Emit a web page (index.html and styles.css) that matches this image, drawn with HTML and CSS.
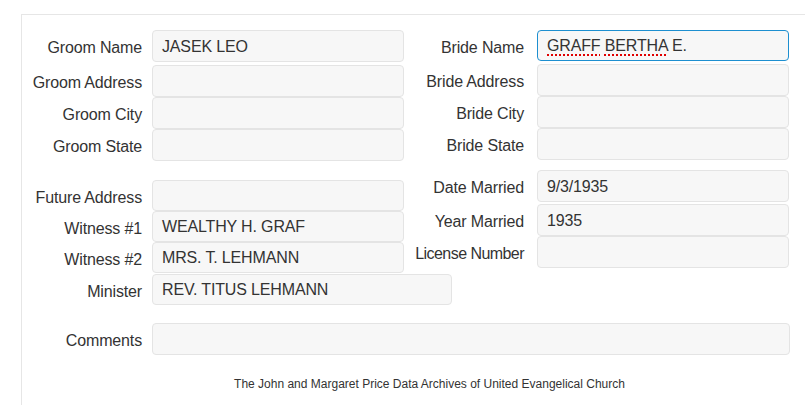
FILE: index.html
```html
<!DOCTYPE html>
<html>
<head>
<meta charset="utf-8">
<link rel="stylesheet" href="styles.css">
</head>
<body>
<div class="panel">
  <div class="block top">
    <div class="col left">
      <div class="row first"><label class="lbl">Groom Name</label><div class="box">JASEK LEO</div></div>
      <div class="row"><label class="lbl">Groom Address</label><div class="box"></div></div>
      <div class="row"><label class="lbl">Groom City</label><div class="box"></div></div>
      <div class="row"><label class="lbl">Groom State</label><div class="box"></div></div>
    </div>
    <div class="col right">
      <div class="row first"><label class="lbl">Bride Name</label><div class="box focus"><span class="spell">GRAFF</span> <span class="spell">BERTHA</span> E.</div></div>
      <div class="row"><label class="lbl">Bride Address</label><div class="box"></div></div>
      <div class="row"><label class="lbl">Bride City</label><div class="box"></div></div>
      <div class="row"><label class="lbl">Bride State</label><div class="box"></div></div>
    </div>
  </div>
  <div class="block mid">
    <div class="col left lower">
      <div class="row sm"><label class="lbl">Future Address</label><div class="box"></div></div>
      <div class="row sm"><label class="lbl">Witness #1</label><div class="box">WEALTHY H. GRAF</div></div>
      <div class="row sm"><label class="lbl">Witness #2</label><div class="box">MRS. T. LEHMANN</div></div>
      <div class="row sm minister"><label class="lbl">Minister</label><div class="box wide">REV. TITUS LEHMANN</div></div>
    </div>
    <div class="col right lower-r">
      <div class="row gap2"><label class="lbl">Date Married</label><div class="box">9/3/1935</div></div>
      <div class="row"><label class="lbl">Year Married</label><div class="box">1935</div></div>
      <div class="row"><label class="lbl lic">License Number</label><div class="box"></div></div>
    </div>
  </div>
  <div class="row comments"><label class="lbl">Comments</label><div class="box full"></div></div>
  <div class="footer">The John and Margaret Price Data Archives of United Evangelical Church</div>
</div>
</body>
</html>
```

FILE: styles.css
```css
html, body {
  margin: 0;
  padding: 0;
  background: #ffffff;
  overflow: hidden;
}
body {
  font-family: "Liberation Sans", Arial, sans-serif;
  color: #333333;
  font-size: 16px;
  width: 805px;
  height: 405px;
}
.panel {
  margin: 14px 0 0 21px;
  width: 816px;
  height: 391px;
  border-top: 1px solid #e6e6e6;
  border-left: 1px solid #e6e6e6;
  padding-top: 15px;
  box-sizing: border-box;
}
.block {
  display: flex;
}
.col {
  display: flex;
  flex-direction: column;
  flex-shrink: 0;
}
.col.left {
  width: 382px;
}
.col.right .lbl {
  margin-right: 13px;
}
.row {
  display: flex;
  align-items: center;
}
.row.first {
  margin-bottom: 3px;
}
.lbl {
  flex-shrink: 0;
  width: 120px;
  margin-right: 10px;
  text-align: right;
  font-size: 16px;
  letter-spacing: -0.15px;
  white-space: nowrap;
  position: relative;
  top: 2px;
}
.lbl.lic {
  letter-spacing: -0.55px;
}
.box {
  flex-shrink: 0;
  width: 252px;
  height: 32px;
  box-sizing: border-box;
  background: #f7f7f7;
  border: 1px solid #e4e4e4;
  border-radius: 4px;
  padding: 1px 9px 0 9px;
  line-height: 29px;
  font-size: 16px;
  letter-spacing: -0.15px;
  color: #333333;
  white-space: nowrap;
  overflow: hidden;
}
.box.focus {
  border-color: #1d8fd0;
  height: 31px;
  line-height: 28px;
}
.spell {
  text-decoration: underline dotted #e00000;
  text-decoration-thickness: 2px;
  text-underline-offset: 3px;
}
.lower {
  margin-top: 19px;
}
.lower-r {
  margin-top: 9px;
}
.row.sm .box {
  height: 31px;
  line-height: 28px;
}
.row.minister {
  margin-top: 1px;
}
.box.wide {
  width: 300px;
}
.row.gap2 {
  margin-bottom: 2px;
}
.comments {
  margin-top: 18px;
}
.box.full {
  width: 638px;
}
.footer {
  margin-top: 22px;
  text-align: center;
  font-size: 12px;
  color: #333333;
}
```
